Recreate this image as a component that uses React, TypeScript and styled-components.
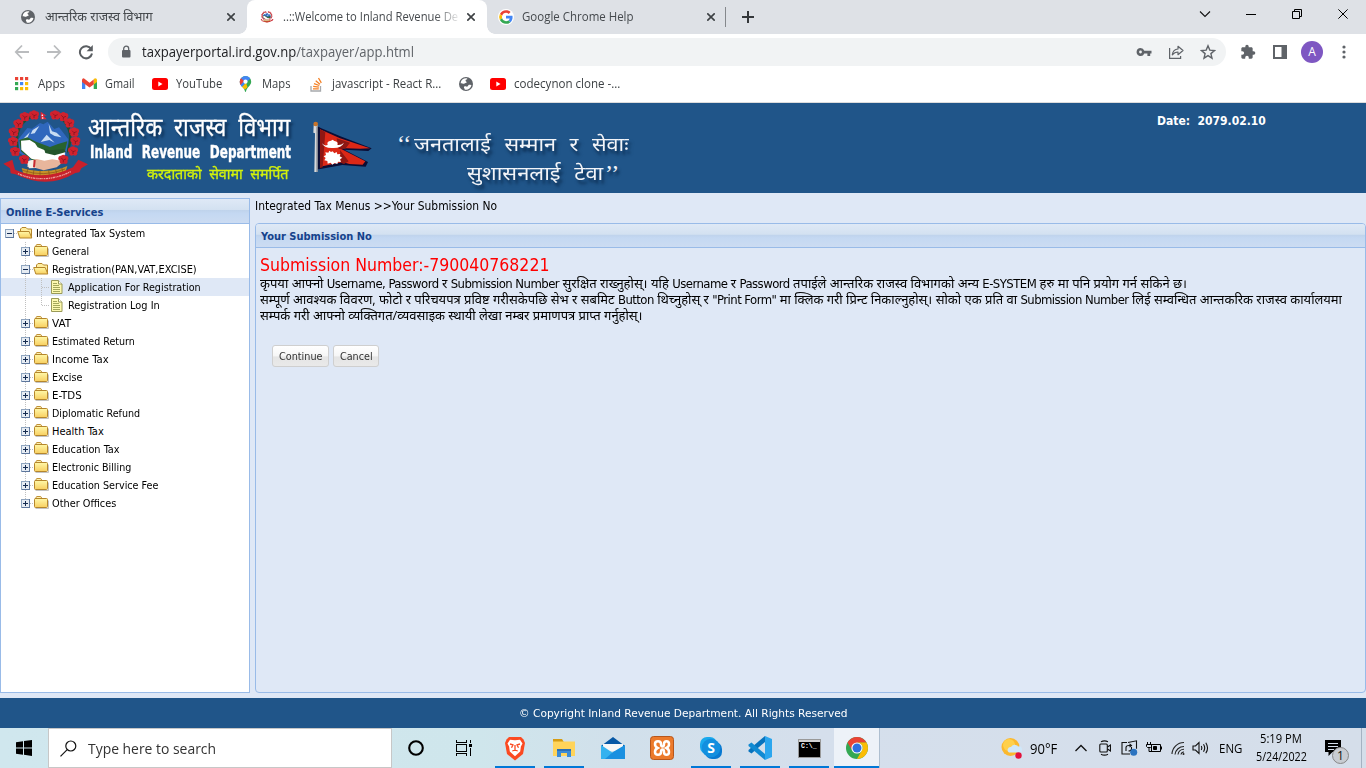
import React, { useLayoutEffect, useRef, useState } from "react";
import styled, { createGlobalStyle, css } from "styled-components";

const UI = `"Open Sans", "Noto Sans", "Noto Sans Devanagari", "Lohit Devanagari", sans-serif`;
const TAHOMA = `"DejaVu Sans Condensed", "DejaVu Sans", "Noto Sans", "Noto Sans Devanagari", sans-serif`;

const Global = createGlobalStyle`
  *, *::before, *::after { box-sizing: border-box; }
  html, body { margin: 0; padding: 0; }
  body { width: 1366px; height: 768px; overflow: hidden; background: #dfe8f6; font-family: ${UI}; color: #000; }
  svg { display: block; flex: none; }
`;

/* ---------- Text set to a fixed measure ---------- */
const Measure = styled.span<{ $w: number }>`
  display: block;
  flex: none;
  width: ${(p) => p.$w}px;
  white-space: nowrap;
`;
const Run = styled.span`
  display: inline-block;
  transform-origin: 0 50%;
`;
function Fit({ w, children }: { w: number; children: React.ReactNode }) {
  const ref = useRef<HTMLSpanElement>(null);
  const [k, setK] = useState(1);
  useLayoutEffect(() => {
    if (ref.current) setK(w / ref.current.offsetWidth);
  }, [w]);
  return (
    <Measure $w={w}>
      <Run ref={ref} style={{ transform: `scaleX(${k})` }}>{children}</Run>
    </Measure>
  );
}

/* ---------- Browser chrome ---------- */
const Screen = styled.div`
  width: 1366px;
  height: 768px;
  display: flex;
  flex-direction: column;
  overflow: hidden;
`;
const TabStrip = styled.div`
  height: 34px;
  flex: none;
  display: flex;
  background: #dee1e6;
`;
const Tab = styled.div<{ $active?: boolean; $w: number; $pad: number }>`
  width: ${(p) => p.$w}px;
  flex: none;
  height: 34px;
  padding: 0 12px 0 ${(p) => p.$pad}px;
  display: flex;
  align-items: center;
  font-size: 12px;
  color: #45494d;
  position: relative;
  ${(p) =>
    p.$active &&
    css`
      background: #fff;
      border-radius: 8px 8px 0 0;
      &::before, &::after {
        content: "";
        position: absolute;
        bottom: 0;
        width: 8px;
        height: 8px;
      }
      &::before { left: -8px; background: radial-gradient(circle at 0 0, transparent 7.5px, #fff 8px); }
      &::after { right: -8px; background: radial-gradient(circle at 100% 0, transparent 7.5px, #fff 8px); }
    `}
`;
const TabTitle = styled.div<{ $gap: number; $fade?: boolean }>`
  flex: 1;
  margin-left: ${(p) => p.$gap}px;
  line-height: 20px;
  ${(p) => p.$fade && css`
    mask-image: linear-gradient(90deg, #000 152px, transparent 178px);
  `}
`;
const TabRule = styled.div`
  width: 1px;
  height: 20px;
  flex: none;
  margin: 7px 13px 0 -2px;
  background: #85888c;
`;
const NewTab = styled.div`
  padding-top: 8px;
  width: 443px;
  flex: none;
`;
const WindowButtons = styled.div`
  display: flex;
  height: 28px;
  align-items: center;
`;
const WindowButton = styled.div`
  width: 46px;
  display: flex;
  justify-content: center;
`;
const Toolbar = styled.div`
  height: 36px;
  flex: none;
  display: flex;
  align-items: center;
  background: #fff;
  padding-left: 14px;
`;
const NavButton = styled.div`
  width: 32px;
  flex: none;
`;
const Omnibox = styled.div`
  width: 1118px;
  height: 28px;
  flex: none;
  margin-left: -2px;
  border-radius: 14px;
  background: #f1f3f4;
  display: flex;
  align-items: center;
  padding: 0 10px 0 12px;
  font-size: 14px;
  color: #5f6368;
  b { font-weight: 400; color: #202124; }
`;
const Url = styled.div`
  flex: 1;
  margin-left: 10px;
  line-height: 24px;
`;
const OmniActions = styled.div`
  display: flex;
  gap: 16px;
`;
const ToolbarActions = styled.div`
  display: flex;
  align-items: center;
  padding-left: 6px;
`;
const ToolbarAction = styled.div`
  width: 32px;
  flex: none;
  display: flex;
  justify-content: center;
`;
const Avatar = styled.div`
  width: 22px;
  height: 22px;
  border-radius: 50%;
  background: #7e57c2;
  color: #fff;
  font: 12px/22px ${UI};
  text-align: center;
`;
const Bookmarks = styled.div`
  height: 33px;
  flex: none;
  display: flex;
  align-items: center;
  background: #fff;
  border-bottom: 1px solid #dcdcdc;
  padding: 0 0 4px 15px;
  font-size: 12px;
  line-height: 16px;
  color: #3c4043;
`;
const Bookmark = styled.div<{ $w: number; $gap: number }>`
  width: ${(p) => p.$w}px;
  flex: none;
  display: flex;
  align-items: center;
  gap: ${(p) => p.$gap}px;
`;

/* ---------- Site banner ---------- */
const Banner = styled.header`
  height: 90px;
  flex: none;
  display: flex;
  background: #205589;
  color: #fff;
`;
const EmblemSlot = styled.div`
  width: 88px;
  padding-top: 7px;
`;
const Brand = styled.div`
  width: 224px;
  display: flex;
  flex-direction: column;
`;
const BrandNepali = styled.div`
  height: 41px;
  padding-top: 3px;
  font: 400 26px/40px ${UI};
  word-spacing: 7px;
  text-shadow: 3px 3px 3px #0b2c50;
  -webkit-text-stroke: 0.3px #fff;
`;
const BrandEnglish = styled.div`
  padding: 0 0 0 2px;
  font: 700 17px/17px "DejaVu Sans Condensed", "DejaVu Sans", sans-serif;
  height: 17px;
  word-spacing: 7px;
  -webkit-text-stroke: 0.4px #fff;
`;
const BrandSlogan = styled.div`
  padding-left: 59px;
  font: 400 15px/24px ${UI};
  word-spacing: 4px;
  color: #d3f20c;
  -webkit-text-stroke: 0.3px #d3f20c;
`;
const FlagSlot = styled.div`
  width: 84px;
  padding-top: 17px;
`;
const Motto = styled.div`
  width: 761px;
  padding-top: 27px;
  font: 400 19px/29px ${UI};
  word-spacing: 7px;
  color: #f2f4f8;
  text-shadow: 2px 4px 3px #0b2c50;
`;
const MottoLine = styled.div<{ $indent: number }>`
  height: 29px;
  display: flex;
  gap: 2px;
  padding-left: ${(p) => p.$indent}px;
`;
const Quote = styled.span`
  width: 15px;
  flex: none;
  font: 24px/29px "Liberation Serif", serif;
  white-space: nowrap;
`;
const BannerDate = styled.div`
  padding-top: 9px;
  font: 700 12px/18px ${TAHOMA};
  white-space: pre;
`;

/* ---------- Body ---------- */
const Body = styled.main`
  height: 505px;
  flex: none;
  display: flex;
  gap: 5px;
  padding: 5px 0;
  background: #dfe8f6;
`;
const panelHead = css`
  background: linear-gradient(#dfe9f6 0, #d3e1f1 45%, #bfd3ec 48%, #c4d8f2 60%, #ccdcf2 100%);
  border-bottom: 1px solid #99bbe8;
  color: #15428b;
  font: 700 11px/16px ${TAHOMA};
  display: flex;
  align-items: center;
  padding-left: 5px;
`;
const Sidebar = styled.aside`
  width: 250px;
  border: 1px solid #99bbe8;
  background: #fff;
`;
const SidebarHead = styled.div`
  ${panelHead};
  height: 25px;
  padding-top: 3px;
`;
const TreeRow = styled.div<{ $selected?: boolean }>`
  height: 18px;
  display: flex;
  align-items: center;
  font: 11px/16px ${TAHOMA};
  background: ${(p) => (p.$selected ? "#dfe8f6" : "transparent")};
  > span { padding-top: 2px; }
`;
const TreeIcon = styled.div`
  margin-right: 3px;
`;
const Content = styled.section`
  width: 1111px;
  display: flex;
  flex-direction: column;
`;
const Crumbs = styled.div`
  height: 25px;
  font: 12px/17px ${TAHOMA};
`;
const Panel = styled.div`
  flex: 1;
  border: 1px solid #99bbe8;
  border-radius: 4px;
  background: #dfe8f6;
  overflow: hidden;
`;
const PanelHead = styled.div`
  ${panelHead};
  height: 24px;
  padding-top: 3px;
`;
const SubmissionNumber = styled.div`
  padding: 6px 0 0 4px;
  height: 28px;
  font: 18px/22px ${TAHOMA};
  color: #f00;
`;
const Notice = styled.div`
  padding-left: 4px;
  font: 12px/16px ${UI};
`;
const NoticeLine = styled.div`
  height: 16px;
`;
const En = styled.span`
  font: 12px/1 ${TAHOMA};
  letter-spacing: -0.5px;
`;
const Buttons = styled.div`
  display: flex;
  gap: 4px;
  padding: 21px 0 0 16px;
`;
const PushButton = styled.button<{ $w: number }>`
  width: ${(p) => p.$w}px;
  height: 22px;
  padding: 2px 0 0 6px;
  border: 1px solid #cfcfcf;
  border-radius: 3px;
  background: linear-gradient(#fff 0, #f6f6f6 50%, #e5e5e5 54%, #e9e9e9 100%);
  font: 11px/16px ${TAHOMA};
  color: #333;
  text-align: left;
`;
const Footer = styled.footer`
  height: 30px;
  flex: none;
  display: flex;
  justify-content: center;
  align-items: center;
  padding-top: 1px;
  background: #205589;
  color: #fff;
  font: 11px/16px ${TAHOMA};
`;

/* ---------- Taskbar ---------- */
const Taskbar = styled.div`
  height: 40px;
  flex: none;
  display: flex;
  background: linear-gradient(90deg, #d0e7ee 0, #cfe6ec 35%, #d1e0eb 45%, #d5dfec 60%, #d5deea 100%);
  > * { flex: none; }
`;
const Start = styled.div`
  width: 48px;
  padding: 12px 0 0 16px;
`;
const Search = styled.div`
  width: 344px;
  border: 1px solid #c7c7c7;
  background: #fff;
  display: flex;
  align-items: center;
  gap: 11px;
  padding-left: 11px;
  font-size: 15px;
  color: #333;
`;
const TaskButton = styled.div<{ $w: number; $run?: boolean; $active?: boolean }>`
  width: ${(p) => p.$w}px;
  display: flex;
  justify-content: center;
  align-items: center;
  position: relative;
  ${(p) => p.$active && css`background: #edf2f8; border-right: 1px solid #aebfd0;`}
  ${(p) => p.$run && css`
    &::after {
      content: "";
      position: absolute;
      bottom: 0;
      left: ${p.$active ? 0 : 5}px;
      width: ${p.$active ? 45 : 40}px;
      height: 2px;
      background: #0078d7;
    }
  `}
`;
const Weather = styled.div`
  width: 189px;
  padding-left: 121px;
  display: flex;
  align-items: center;
  gap: 8px;
  font-size: 14px;
`;
const Tray = styled.div`
  display: flex;
  align-items: center;
`;
const TrayItem = styled.div<{ $w: number }>`
  width: ${(p) => p.$w}px;
  display: flex;
  justify-content: center;
  font-size: 12px;
`;
const Clock = styled.div`
  display: flex;
  flex-direction: column;
  align-items: center;
  font-size: 12px;
  line-height: 18px;
  width: 64px;
`;
const Action = styled.div`
  width: 49px;
  padding: 11px 0 0 11px;
  border-right: 1px solid #a5b2c2;
`;

/* ---------- Icons ---------- */
const Globe = () => (
  <svg width="14" height="14" viewBox="0 0 14 14">
    <circle cx="7" cy="7" r="7" fill="#5f6368" />
    <path d="M1.6 6.2c1.4 0 2.2.6 3.2.6 1.3 0 1.4-.9 2.3-1 .9 0 .6-1 0-1.3-.9-.4-.6-1.7.3-1.9.8-.1 1-.6.8-1.1C5 .8 2 2.800 1.600 6.200zM5.800 12.700c.1-1.300-.9-1.300-.9-2.300.1-1.100 1.400-1.300 2.300-.9.7.4 2-.1 2-1 0-.8 1-1 1.700-.8l1.500.2c-.5 3-3.300 5.500-6.600 4.800z" fill="#fff" />
  </svg>
);
const Cross = ({ s = 8, w = 1.6, c = "#3c4043" }) => (
  <svg width={s} height={s} viewBox="0 0 8 8"><path d="M.3.3l7.400 7.400M7.700.3L.3 7.700" stroke={c} strokeWidth={w} /></svg>
);
const YouTube = () => (
  <svg width="16" height="12" viewBox="0 0 16 12"><rect width="16" height="12" rx="2.500" fill="#f00" /><path d="M6.300 3.600l4.200 2.400-4.200 2.400z" fill="#fff" /></svg>
);
const Google = () => (
  <svg width="16" height="16" viewBox="-4 -4 56 56">
    <circle cx="24" cy="24" r="28" fill="#fff" />
    <path fill="#EA4335" d="M24 9.500c3.500 0 6.700 1.200 9.200 3.600l6.900-6.900C35.900 2.400 30.500 0 24 0 14.600 0 6.500 5.400 2.600 13.200l8 6.200C12.400 13.700 17.700 9.500 24 9.500z" />
    <path fill="#4285F4" d="M47 24.500c0-1.600-.2-3.100-.4-4.500H24v9h12.900c-.6 3-2.200 5.500-4.700 7.200l7.700 6C44.400 38 47 31.800 47 24.500z" />
    <path fill="#FBBC05" d="M10.500 28.600a14.500 14.500 0 010-9.200l-8-6.200a24 24 0 000 21.600z" />
    <path fill="#34A853" d="M24 48c6.500 0 11.900-2.100 15.900-5.800l-7.700-6c-2.200 1.500-4.900 2.300-8.200 2.300-6.300 0-11.600-4.200-13.500-9.900l-8 6.200C6.500 42.600 14.600 48 24 48z" />
  </svg>
);
const flowers = [[102,45],[74,50],[55,71],[41,96],[39,124],[45,154],[72,178],[165,45],[190,50],[208,69],[222,96],[226,123],[219,153],[190,178]];
const Emblem = ({ w = 90, h = 74 }) => (
  <svg width={w} height={h} viewBox="0 30 270 222">
    <path d="M85 178C34 150 40 62 108 45M176 178c52-28 44-116-12-133" fill="none" stroke="#1c5030" strokeWidth="7" />
    <path d="M55 118L82 84l14 2 24-17 10 4 13-8 20 22 14-5 28 36-6 46-50 26-52-2-40-30z" fill="#2f67bd" />
    <path d="M118 78l-14 22-12 2 6-12zM146 72l10 22 14 4 14 14-20-4-14-8zM90 96l-20 20 12-2zM140 104l-18 22 26-6 16 8z" fill="#c8dcf3" />
    <path d="M58 120l24-8 26 13 42 16 24-9 28-8-8 34-45 27-53-4-33-27z" fill="#28632e" />
    <path d="M63 122l26-2 16 10 8 12 34 14 48-2-2 30-27 6-36-6-36-8-30-27z" fill="#fff" />
    <path d="M132 146l16 5 44-3 6 8-34 10-28-7z" fill="#24542b" />
    <path d="M84 184l26-7 23 5 24-4 35 6-22 18-39 9-24-7-25-3z" fill="#e8b69c" />
    <path d="M80 184l20-5 7 25-20 1z" fill="#f6efe6" /><path d="M104 180l-2 22" stroke="#c62a30" strokeWidth="6" />
    <path d="M65 204q35 11 65 8 40 1 72-14l-10 32q-60 20-119 0z" fill="#c79128" />
    <path d="M67 211q65 22 128-4M70 220q65 20 121-2M84 205l-6 24M102 208l-4 28M120 210v25M146 211l3 24M166 207l7 23M185 203l6 21" stroke="#855018" strokeWidth="2" fill="none" />
    {flowers.map(([x, y]) => (
      <g key={`${x}-${y}`} fill="#d0222e">
        <circle cx={x - 7} cy={y - 3} r="8" /><circle cx={x + 7} cy={y - 3} r="8" />
        <circle cx={x} cy={y - 7} r="7" /><circle cx={x - 4} cy={y + 7} r="7" /><circle cx={x + 6} cy={y + 7} r="7" />
        <path d={`M${x - 6} ${y - 4}l6 6 8-3M${x} ${y + 2}v7`} stroke="#74101d" strokeWidth="2" fill="none" />
      </g>
    ))}
    <path d="M122 35l18 12h-9l9 11h-18z" fill="#e02535" /><circle cx="127" cy="46" r="2.500" fill="#fff" /><circle cx="128" cy="54" r="2.500" fill="#fff" />
    <path d="M10 191l27-12 8 30q85 37 174-7l16-23 29 14-20 12-6 12-12 2q-84 50-180 4l-14-3-2-15z" fill="#c8202b" />
    <path d="M54 221q78 33 158-6" fill="none" stroke="#eba09c" strokeWidth="4" strokeDasharray="4 2 7 2 3 2" />
  </svg>
);
const Flag = () => (
  <svg width="62" height="53" viewBox="36 60 186 159">
    <path d="M51 78l10 6v120l-10 6z" fill="#0a0c33" />
    <path d="M57 82l64 27 94 36-10 8-72-4 71 37-7 14-70-5-70 13z" fill="#0b0d35" />
    <path d="M60 88l60 27 90 30-30 1-62-2 78 40-8 10-40-2-20-6-68 14z" fill="#dc2817" />
    <path d="M110 115l40 13-14 18-20 1zM120 150l26 34-14 8-10-4zM60 88l16 8-8 106-8 2z" fill="#8e1713" />
    <path d="M66 130q7 9 17 5-4-12 10-13l5-3 5 4q13 2 9 12 11 2 20-7-8 17-34 16-26 1-32-14z" fill="#fff" />
    <path d="M98 154l5 6 7-4 2 7 9-1-2 7 8 4-7 5 3 8-9-1-2 7-8-3-7 5-5-6-9 3-1-8-9-2 4-7-6-5 7-4-2-8 9 1 3-6 5 4z" fill="#fff" />
    <path d="M41 76h12v140h-10l2-116-5-2z" fill="#d9dadb" /><path d="M51 79v137" stroke="#707880" strokeWidth="3" />
    <circle cx="47" cy="72" r="7" fill="#c8742a" />
  </svg>
);
const Folder = ({ open }: { open?: boolean }) => (
  <svg width="16" height="16" viewBox="0 0 16 16">
    <defs><linearGradient id="fold" x1="0" y1="0" x2="0" y2="1"><stop offset="0" stopColor="#fff8a8" /><stop offset="1" stopColor="#f8cf60" /></linearGradient></defs>
    {open ? (
      <>
        <path d="M3.500 12.500V4L5 2.500h4L10.500 4h4v8.500z" fill="#ffeea0" stroke="#b5862c" />
        <path d="M.7 6.500h11.500l2.600 6.500H2.800z" fill="url(#fold)" stroke="#b5862c" />
      </>
    ) : (
      <>
        <path d="M15.500 5.500V13.500H2.500" stroke="#c4c4c4" fill="none" />
        <path d="M2.500 3.500L3.700 1.500h4l1.300 2" fill="#fff2b0" stroke="#c09238" />
        <path d="M2 3.500h11.500q1 0 1 1V11.500q0 1-1 1H2.500q-1 0-1-1V4.500q0-1 1-1z" fill="url(#fold)" stroke="#b5862c" />
      </>
    )}
  </svg>
);
const Leaf = () => (
  <svg width="16" height="16" viewBox="0 0 16 16">
    <path d="M2.500 1.500h7l3.500 3.500v9.500H2.500z" fill="#fdf9b0" stroke="#9a9a58" />
    <path d="M9.500 1.500V5H13" fill="#fff" stroke="#9a9a58" />
    <path d="M4 4.500h4M4 6.500h6M4 8.500h7M4 10.500h7M4 12.500h7" stroke="#a3a75c" />
  </svg>
);
/* The guide lines and the expander that precede a tree node's own icon. */
const Guides = ({ depth, open, leaf, last }: { depth: number; open?: boolean; leaf?: boolean; last?: boolean }) => {
  const x = depth * 16 + 8.5;
  return (
    <svg width={(depth + 1) * 16} height="18" viewBox={`0 0 ${(depth + 1) * 16} 18`} shapeRendering="crispEdges">
      <g stroke="#c0c0c0" strokeDasharray="1 1" fill="none">
        {depth === 2 && <path d="M24.500 0v18" />}
        {depth > 0 && <path d={`M${x} 0v${last ? 9 : 18}`} />}
        <path d={`M${x} 9.500h8`} />
      </g>
      {!leaf && (
        <>
          <rect x={x - 4} y="5.500" width="8" height="8" fill="#e6ecf3" stroke="#8fa5bf" />
          <path d={`M${x - 4} 13.500h8.500M${x + 4} 5v8`} stroke="#5d769c" fill="none" />
          <path d={`M${x - 2.500} 9.500h5${open ? "" : `M${x} 7v5`}`} stroke="#152b50" />
        </>
      )}
    </svg>
  );
};
const Chrome = () => (
  <svg width="24" height="24" viewBox="-12 -12 24 24">
    <circle r="11" fill="#34a853" />
    <path d="M-9.500-5.500A11 11 0 019.500-5.500L0-5.200-4.800 2.600z" fill="#ea4335" />
    <path d="M9.500-5.500A11 11 0 010 11L4.800 2.500A5.200 5.200 0 000-5.500z" fill="#fbbc04" />
    <circle r="5.600" fill="#fff" /><circle r="4.500" fill="#2f70e0" />
  </svg>
);

type Node = { label: string; w: number; depth: number; open?: boolean; leaf?: boolean; last?: boolean; selected?: boolean };
const tree: Node[] = [
  { label: "Integrated Tax System", w: 109, depth: 0, open: true },
  { label: "General", w: 37, depth: 1 },
  { label: "Registration(PAN,VAT,EXCISE)", w: 145, depth: 1, open: true },
  { label: "Application For Registration", w: 133, depth: 2, leaf: true, selected: true },
  { label: "Registration Log In", w: 92, depth: 2, leaf: true, last: true },
  { label: "VAT", w: 19, depth: 1 },
  { label: "Estimated Return", w: 83, depth: 1 },
  { label: "Income Tax", w: 57, depth: 1 },
  { label: "Excise", w: 30, depth: 1 },
  { label: "E-TDS", w: 30, depth: 1 },
  { label: "Diplomatic Refund", w: 88, depth: 1 },
  { label: "Health Tax", w: 52, depth: 1 },
  { label: "Education Tax", w: 68, depth: 1 },
  { label: "Electronic Billing", w: 79, depth: 1 },
  { label: "Education Service Fee", w: 106, depth: 1 },
  { label: "Other Offices", w: 64, depth: 1, last: true },
];

function BrowserChrome() {
  return (
    <>
      <TabStrip>
        <Tab $w={247} $pad={21}>
          <Globe /><TabTitle $gap={10}><Fit w={108}>आन्तरिक राजस्व विभाग</Fit></TabTitle><Cross />
        </Tab>
        <Tab $w={240} $pad={13} $active>
          <Emblem w={14} h={12} /><TabTitle $gap={9} $fade><Fit w={175}>..::Welcome to Inland Revenue De</Fit></TabTitle><Cross />
        </Tab>
        <Tab $w={240} $pad={11}>
          <Google /><TabTitle $gap={8}><Fit w={112}>Google Chrome Help</Fit></TabTitle><Cross />
        </Tab>
        <TabRule />
        <NewTab><svg width="18" height="18" viewBox="0 0 18 18"><path d="M3 9h12M9 3v12" stroke="#34373a" strokeWidth="2" /></svg></NewTab>
        <WindowButtons>
          <WindowButton><svg width="12" height="12" viewBox="0 0 12 12"><path d="M1 3.500l5 5 5-5" fill="none" stroke="#111" strokeWidth="1.100" /></svg></WindowButton>
          <WindowButton><svg width="10" height="10" viewBox="0 0 10 10"><path d="M0 5.500h10" stroke="#000" /></svg></WindowButton>
          <WindowButton><svg width="10" height="10" viewBox="0 0 10 10"><path d="M.5 2.500h7v7h-7zM2.500 2.500v-2h7v7h-2" fill="none" stroke="#000" /></svg></WindowButton>
          <WindowButton><Cross s={10} w={0.8} c="#000" /></WindowButton>
        </WindowButtons>
      </TabStrip>
      <Toolbar>
        <NavButton><svg width="16" height="16" viewBox="0 0 16 16" fill="none" stroke="#babcbe" strokeWidth="1.800"><path d="M15 8H2M8 1.500L1.800 8 8 14.500" /></svg></NavButton>
        <NavButton><svg width="16" height="16" viewBox="0 0 16 16" fill="none" stroke="#babcbe" strokeWidth="1.800"><path d="M1 8h13M8 1.500L14.200 8 8 14.500" /></svg></NavButton>
        <NavButton><svg width="16" height="16" viewBox="0 0 16 16"><path d="M13.200 5A6.100 6.100 0 1014 9.500" fill="none" stroke="#5a5e62" strokeWidth="2" /><path d="M14.800 1v6.200H8.600z" fill="#5a5e62" /></svg></NavButton>
        <Omnibox>
          <svg width="12" height="14" viewBox="0 0 12 14"><rect x="2" y="5" width="8.500" height="7.500" rx="1" fill="#5f6368" /><path d="M3.700 5.500V3.700a2.500 2.500 0 015 0v1.800" fill="none" stroke="#5f6368" strokeWidth="1.300" /></svg>
          <Url><Fit w={272}><b>taxpayerportal.ird.gov.np</b>/taxpayer/app.html</Fit></Url>
          <OmniActions>
            <svg width="16" height="16" viewBox="0 0 16 16"><path fillRule="evenodd" d="M4.500 4a4 4 0 013.800 2.700H15.500v2.800h-1.300V12h-2.800V9.500H8.300A4 4 0 114.500 4zm0 2.600a1.400 1.400 0 100 2.800 1.400 1.400 0 000-2.800z" fill="#5f6368" /></svg>
            <svg width="16" height="16" viewBox="0 0 16 16" fill="none" stroke="#5f6368" strokeWidth="1.200"><path d="M1.600 4v10.400h11v-2.500" /><path d="M4.300 10.800C4.800 7 7 5.200 10 5V2.300L15 6.500l-5 4.200V8C7.500 8 5.700 9 4.300 10.800z" strokeLinejoin="round" /></svg>
            <svg width="16" height="16" viewBox="0 0 16 16" fill="none" stroke="#5f6368" strokeWidth="1.400"><path d="M8 1.800l1.800 4.300 4.700.4-3.600 3.100L12 14.200 8 11.700l-4 2.500 1.100-4.600L1.500 6.500l4.700-.4z" /></svg>
          </OmniActions>
        </Omnibox>
        <ToolbarActions>
          <ToolbarAction><svg width="16" height="16" viewBox="0 0 24 24"><path d="M20.500 11H19V7c0-1.100-.9-2-2-2h-4V3.500a2.500 2.500 0 00-5 0V5H4c-1.100 0-2 .9-2 2v3.800h1.500a2.700 2.700 0 010 5.400H2V20c0 1.100.9 2 2 2h3.800v-1.500a2.700 2.700 0 015.400 0V22H17c1.100 0 2-.9 2-2v-4h1.500a2.500 2.500 0 000-5z" fill="#5f6368" /></svg></ToolbarAction>
          <ToolbarAction><svg width="14" height="14" viewBox="0 0 14 14"><path d="M1 1h12v12H1z" fill="none" stroke="#5f6368" strokeWidth="2" /><path d="M8.500 1H13v12H8.500z" fill="#5f6368" /></svg></ToolbarAction>
          <ToolbarAction><Avatar>A</Avatar></ToolbarAction>
          <ToolbarAction><svg width="4" height="14" viewBox="0 0 4 14" fill="#5f6368"><circle cx="2" cy="2" r="1.600" /><circle cx="2" cy="7" r="1.600" /><circle cx="2" cy="12" r="1.600" /></svg></ToolbarAction>
        </ToolbarActions>
      </Toolbar>
      <Bookmarks>
        <Bookmark $w={67} $gap={9}>
          <svg width="14" height="14" viewBox="0 0 14 14">
            {["#ea4335", "#ea4335", "#ea4335", "#34a853", "#4285f4", "#fbbc04", "#34a853", "#fbbc04", "#fbbc04"].map((c, i) => (
              <rect key={i} x={(i % 3) * 5} y={Math.floor(i / 3) * 5} width="3.200" height="3.200" fill={c} />
            ))}
          </svg>
          <Fit w={27}>Apps</Fit>
        </Bookmark>
        <Bookmark $w={70} $gap={8}>
          <svg width="15" height="12" viewBox="0 0 15 12"><path d="M0 1.500V11h3.300V5.200z" fill="#4285f4" /><path d="M15 1.500V11h-3.300V5.200z" fill="#34a853" /><path d="M11.700 1l1.500-.8Q15 .2 15 2v2l-3.300 2.500z" fill="#fbbc04" /><path d="M0 2Q0 .2 1.800.2L7.500 4.700l4.200-3.300v5L7.500 9.500 0 4z" fill="#ea4335" /></svg>
          <Fit w={30}>Gmail</Fit>
        </Bookmark>
        <Bookmark $w={87} $gap={8}><YouTube /><Fit w={46}>YouTube</Fit></Bookmark>
        <Bookmark $w={71} $gap={10}>
          <svg width="13" height="16" viewBox="0 0 13 16"><path d="M6.500 0A5.700 5.700 0 00.8 5.700c0 4 4.600 5.300 5.200 9.800.1.600.9.600 1 0 .6-4.500 5.200-5.800 5.200-9.800A5.700 5.700 0 006.500 0z" fill="#34a853" /><path d="M.8 5.700A5.700 5.700 0 016.500 0c2 0 3.800 1 4.800 2.600L3 11C1.800 9.500.8 8 .8 5.700z" fill="#4285f4" /><path d="M2 2.200L5 5l-3.500 4C.6 7 .3 4 2 2.200z" fill="#ea4335" /><path d="M3 11l4-4.300 1.500 4.500L6 13.500z" fill="#fbbc04" /><circle cx="6.500" cy="5.700" r="2.100" fill="#fff" /></svg>
          <Fit w={29}>Maps</Fit>
        </Bookmark>
        <Bookmark $w={149} $gap={8}>
          <svg width="14" height="15" viewBox="0 0 14 15" fill="none"><path d="M1 9v5h9.500V9" stroke="#a7a9ac" strokeWidth="1.300" /><path d="M3 11.900h5.800M3.200 9.400l5.700.7M4 6.600l5.300 1.900M5.700 3.800l4.300 3.500M8.500 1l2.800 4.800" stroke="#f48024" strokeWidth="1.300" /></svg>
          <Fit w={109}>javascript - React R...</Fit>
        </Bookmark>
        <Bookmark $w={31} $gap={0}><Globe /></Bookmark>
        <Bookmark $w={140} $gap={8}><YouTube /><Fit w={106}>codecynon clone -...</Fit></Bookmark>
      </Bookmarks>
    </>
  );
}

function WindowsTaskbar() {
  return (
    <Taskbar>
      <Start><svg width="16" height="16" viewBox="0 0 16 16"><path d="M0 2.300l7-1v6.200H0zM8 1.100L16 0v7.500H8zM0 8.500h7v6.200l-7-1zM8 8.500h8V16l-8-1.200z" /></svg></Start>
      <Search>
        <svg width="17" height="17" viewBox="0 0 17 17" fill="none" stroke="#111" strokeWidth="1.200"><circle cx="10.800" cy="6" r="5" /><path d="M7.200 9.600L.5 16.300" /></svg>
        <Fit w={128}>Type here to search</Fit>
      </Search>
      <TaskButton $w={48}><svg width="18" height="18" viewBox="0 0 18 18"><circle cx="9" cy="9" r="6.800" fill="none" stroke="#000" strokeWidth="2.100" /></svg></TaskButton>
      <TaskButton $w={50}>
        <svg width="20" height="16" viewBox="0 0 20 16" fill="none" stroke="#000" shapeRendering="crispEdges"><path d="M1.500 0v2.500h10V0M1.500 16v-2.500h10V16M1.500 4.500h10v7h-10zM15.500 0v3M15.500 8v8" /><path d="M14 4h3v3h-3z" fill="#000" stroke="none" /></svg>
      </TaskButton>
      <TaskButton $w={49} $run>
        <svg width="22" height="25" viewBox="0 0 22 25"><path d="M5 1h12l2.500 2.500L21 7l-2 11-8 6.500L3 18 1 7l1.500-3.500z" fill="#fb4a21" /><path d="M11 4.200l5-.4 2.500 3.700-1.600 3-.7 5-5.200 4.800L5.800 15.500l-.7-5-1.600-3L6 3.800z" fill="#fff" /><path d="M6 8l3 .8-1.500 3M16 8l-3 .8 1.500 3M11 9v6M8.300 15l2.700-1 2.700 1" fill="none" stroke="#fb4a21" strokeWidth="1.300" /></svg>
      </TaskButton>
      <TaskButton $w={49} $run>
        <svg width="22" height="20" viewBox="0 0 22 20"><path d="M0 1h9l1.500 2.500V8H0z" fill="#d69c12" /><path d="M0 3.500h22V18H0z" fill="#ffd45a" /><path d="M4 11h14v8h-4v-4H8v4H4z" fill="#3a8bd6" /><path d="M4 11h14v2H4z" fill="#2c6fb3" /></svg>
      </TaskButton>
      <TaskButton $w={49}>
        <svg width="24" height="24" viewBox="0 0 24 24"><path d="M0 10L12 1l12 9v5H0z" fill="#0758a5" /><path d="M2 8h20v7H2z" fill="#f7f7f7" /><path d="M0 9l12 8 12-8v14H0z" fill="#35b2ef" /><path d="M12 16L24 9v14H4z" fill="#1a90e0" /></svg>
      </TaskButton>
      <TaskButton $w={49}>
        <svg width="24" height="24" viewBox="0 0 24 24"><rect x=".5" y=".5" width="23" height="23" rx="3" fill="#ec7a2b" stroke="#b7561b" /><path d="M8 5.200q3 0 3 2.800 0 2.500 1.500 2.500T14 8q0-2.800 2.500-2.800T19 8q0 2.800-2.500 4 2.500 1.200 2.500 4t-2.500 2.800T14 16q0-2.500-1.500-2.500T11 16q0 2.800-3 2.800T5 16q0-2.800 2.500-4Q5 10.800 5 8q0-2.800 3-2.800z" fill="none" stroke="#fff" strokeWidth="2.500" /></svg>
      </TaskButton>
      <TaskButton $w={49} $run>
        <svg width="22" height="22" viewBox="0 0 22 22"><rect width="17" height="17" rx="7" fill="#1aa9ed" /><rect x="5" y="5" width="17" height="17" rx="7" fill="#0879d1" /><circle cx="11" cy="11" r="9.300" fill="#128fdf" /><text x="11" y="16" textAnchor="middle" fontFamily="Open Sans" fontWeight="700" fontSize="14" fill="#fff">S</text></svg>
      </TaskButton>
      <TaskButton $w={49} $run>
        <svg width="24" height="24" viewBox="0 0 24 24"><path d="M17 0v6L3.500 17.500.5 15.500V14z" fill="#0873bd" /><path d="M17 24v-6L3.500 6.500.5 8.500V10z" fill="#118ad2" /><path d="M17 0l7 3v18l-7 3z" fill="#2ba6ee" /></svg>
      </TaskButton>
      <TaskButton $w={50} $run>
        <svg width="23" height="19" viewBox="0 0 23 19"><path d="M.5.5h22v18H.5z" fill="#000" stroke="#999" /><path d="M1 1h21v2H1z" fill="#d3d3d3" /><text x="3" y="9" fontFamily="Liberation Mono" fontSize="6.500" fontWeight="700" fill="#fff">C:\_</text></svg>
      </TaskButton>
      <TaskButton $w={46} $run $active><Chrome /></TaskButton>
      <Weather>
        <svg width="21" height="21" viewBox="0 0 21 21"><circle cx="9.500" cy="9" r="9" fill="#fbb82e" /><circle cx="8" cy="7" r="6" fill="#ffd04b" /><path d="M8 14.500a3 3 0 012-5.500 4 4 0 017-.5 3 3 0 012 6z" fill="#cfe7fa" /><circle cx="17.500" cy="17.500" r="3.200" fill="#e3123b" /></svg>
        <Fit w={27}>90°F</Fit>
      </Weather>
      <Tray>
        <TrayItem $w={24}><svg width="12" height="8" viewBox="0 0 12 8"><path d="M.5 7L6 1.500 11.500 7" fill="none" stroke="#111" strokeWidth="1.300" /></svg></TrayItem>
        <TrayItem $w={24}><svg width="12" height="16" viewBox="0 0 12 16" fill="none" stroke="#111" strokeWidth="1.100"><rect x=".8" y="4" width="7.500" height="8" rx="1" /><path d="M8.500 7l3-2v6l-3-2M2 1.800Q5.500 0 9 1.800M2 14.200Q5.500 16 9 14.200" /></svg></TrayItem>
        <TrayItem $w={24}><svg width="17" height="16" viewBox="0 0 17 16" fill="none" stroke="#111" strokeWidth="1.100"><path d="M9 14H1V2.500h5M7 2.500L15.500.8v8M5 11V7.500q0-2 3-2h2M8.500 3.800l2 1.700-2 1.700M10.500 7v2q0 2-3 2" /><circle cx="12.700" cy="12.300" r="3.500" fill="#2b73c0" stroke="none" /></svg></TrayItem>
        <TrayItem $w={25}><svg width="16" height="14" viewBox="0 0 16 14" fill="none" stroke="#000"><path d="M5.500 3.500h9v7h-9zM15.500 5.500v3M1.500 1v2M4.500 1v2M.5 3.500h5v2l-1 1h-3l-1-1zM3 6v4.500h3" /><path d="M7.500 5.500h3v3h-3z" fill="#000" /></svg></TrayItem>
        <TrayItem $w={24}><svg width="14" height="14" viewBox="0 0 14 14" fill="none" stroke="#222" strokeWidth="1.100"><path d="M1 13A12 12 0 0113 1.500M4 13.500a9 9 0 019-8M7 13.500a6 6 0 016-5.200M10 13.500a3 3 0 013-2.500" /><circle cx="12.500" cy="13" r="1" fill="#222" stroke="none" /></svg></TrayItem>
        <TrayItem $w={22}><svg width="18" height="14" viewBox="0 0 18 14" fill="none" stroke="#111" strokeWidth="1.100"><path d="M1 5h2.500L7 1.500v11L3.500 9H1zM9.300 5q1.200 2 0 4M11.500 3.300q2.400 3.700 0 7.400M13.800 1.700q3.500 5.300 0 10.600" /></svg></TrayItem>
        <TrayItem $w={37}><Fit w={23}>ENG</Fit></TrayItem>
        <Clock><Fit w={42}>5:19 PM</Fit><Fit w={51}>5/24/2022</Fit></Clock>
      </Tray>
      <Action>
        <svg width="26" height="26" viewBox="0 0 26 26"><path d="M1 1h16v12H8.500l-4 4v-4H1z" /><path d="M4 4.500h10M4 7.500h10M4 10.500h6" stroke="#d5deea" /><circle cx="16.500" cy="16.500" r="8" fill="#c8ccd2" stroke="#888" /><text x="16.500" y="20.500" textAnchor="middle" fontFamily="Open Sans" fontSize="12" fill="#111">1</text></svg>
      </Action>
    </Taskbar>
  );
}

export default function App() {
  return (
    <Screen>
      <Global />
      <BrowserChrome />
      <Banner>
        <EmblemSlot><Emblem /></EmblemSlot>
        <Brand>
          <BrandNepali><Fit w={202}>आन्तरिक राजस्व विभाग</Fit></BrandNepali>
          <BrandEnglish><Fit w={201}>Inland Revenue Department</Fit></BrandEnglish>
          <BrandSlogan><Fit w={141}>करदाताको सेवामा समर्पित</Fit></BrandSlogan>
        </Brand>
        <FlagSlot><Flag /></FlagSlot>
        <Motto>
          <MottoLine $indent={1}><Quote>‘‘</Quote><Fit w={215}>जनतालाई सम्मान र सेवाः</Fit></MottoLine>
          <MottoLine $indent={71}><Fit w={136}>सुशासनलाई टेवा</Fit><Quote>’’</Quote></MottoLine>
        </Motto>
        <BannerDate><Fit w={109}>Date:&nbsp; 2079.02.10</Fit></BannerDate>
      </Banner>
      <Body>
        <Sidebar>
          <SidebarHead><Fit w={97}>Online E-Services</Fit></SidebarHead>
          {tree.map((n) => (
            <TreeRow key={n.label} $selected={n.selected}>
              <Guides depth={n.depth} open={n.open} leaf={n.leaf} last={n.last} />
              <TreeIcon>{n.leaf ? <Leaf /> : <Folder open={n.open} />}</TreeIcon>
              <Fit w={n.w}>{n.label}</Fit>
            </TreeRow>
          ))}
        </Sidebar>
        <Content>
          <Crumbs><Fit w={242}>Integrated Tax Menus &gt;&gt;Your Submission No</Fit></Crumbs>
          <Panel>
            <PanelHead><Fit w={111}>Your Submission No</Fit></PanelHead>
            <SubmissionNumber><Fit w={289}>Submission Number:-790040768221</Fit></SubmissionNumber>
            <Notice>
              <NoticeLine><Fit w={927}>कृपया आफ्नो <En>Username, Password</En> र <En>Submission Number</En> सुरक्षित राख्नुहोस्। यहि <En>Username</En> र <En>Password</En> तपाईले आन्तरिक राजस्व विभागको अन्य <En>E-SYSTEM</En> हरु मा पनि प्रयोग गर्न सकिने छ।</Fit></NoticeLine>
              <NoticeLine><Fit w={1082}>सम्पूर्ण आवश्यक विवरण, फोटो र परिचयपत्र प्रविष्ट गरीसकेपछि सेभ र सबमिट <En>Button</En> थिच्नुहोस् र <En>"Print Form"</En> मा क्लिक गरी प्रिन्ट निकाल्नुहोस्। सोको एक प्रति वा <En>Submission Number</En> लिई सम्वन्धित आन्तकरिक राजस्व कार्यालयमा</Fit></NoticeLine>
              <NoticeLine><Fit w={383}>सम्पर्क गरी आफ्नो व्यक्तिगत/व्यवसाइक स्थायी लेखा नम्बर प्रमाणपत्र प्राप्त गर्नुहोस्।</Fit></NoticeLine>
            </Notice>
            <Buttons>
              <PushButton $w={57}><Fit w={44}>Continue</Fit></PushButton>
              <PushButton $w={46}><Fit w={33}>Cancel</Fit></PushButton>
            </Buttons>
          </Panel>
        </Content>
      </Body>
      <Footer><Fit w={328}>© Copyright Inland Revenue Department. All Rights Reserved</Fit></Footer>
      <WindowsTaskbar />
    </Screen>
  );
}
